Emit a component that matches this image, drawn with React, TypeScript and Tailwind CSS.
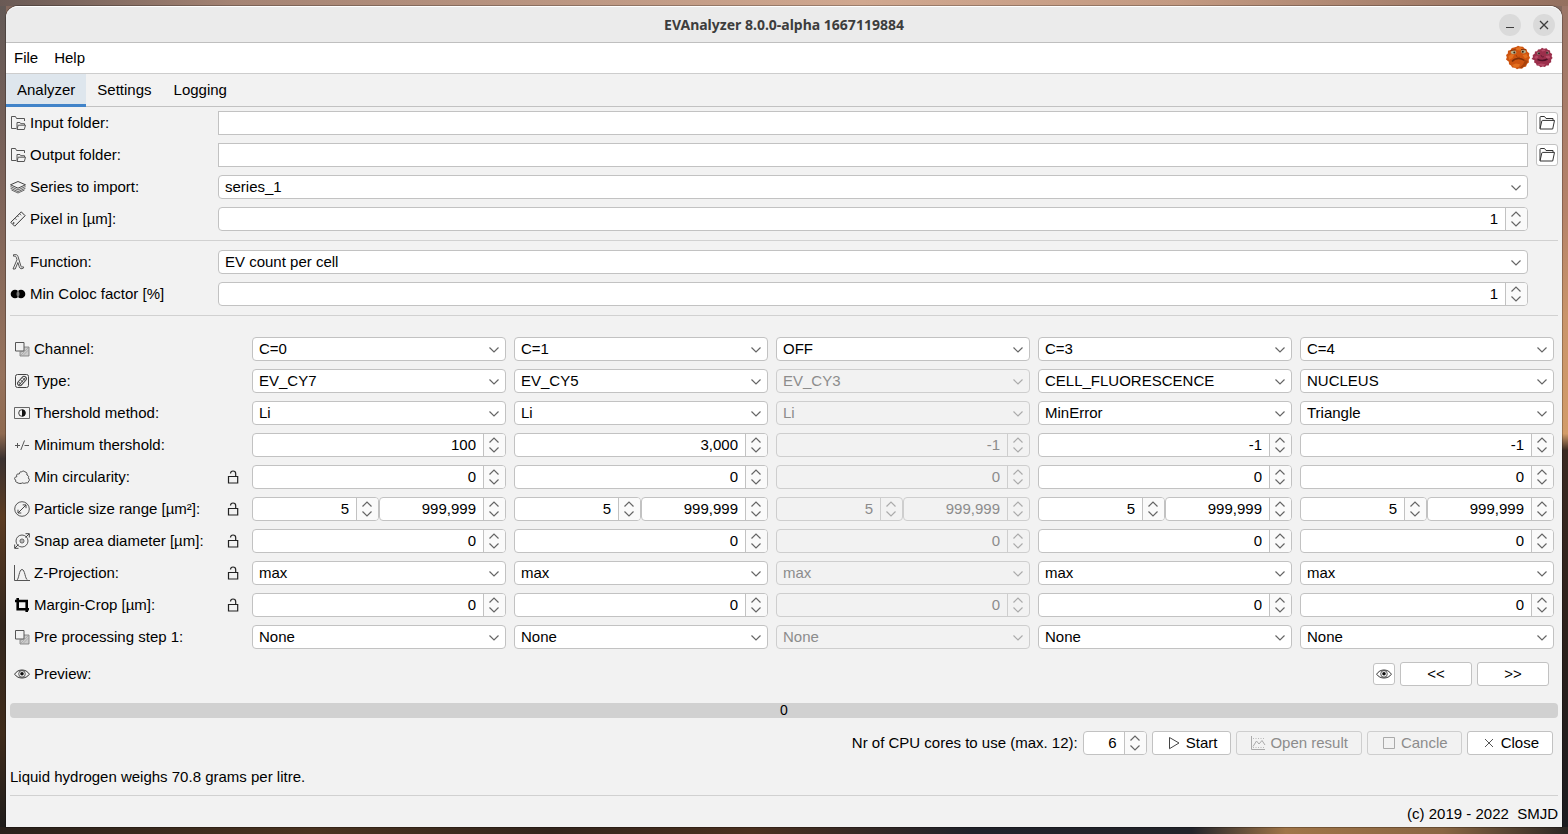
import { useState } from 'react';
import type { ReactNode } from 'react';
import clsx from 'clsx';

interface Channel {
  channel: string;
  type: string;
  method: string;
  threshold: string;
  disabled?: boolean;
}

interface ChannelRow {
  id: string;
  label: string;
  icon: ReactNode;
  lock?: boolean;
  cell: (channel: Channel, id: string) => ReactNode;
}

const channels: Channel[] = [
  { channel: 'C=0', type: 'EV_CY7', method: 'Li', threshold: '100' },
  { channel: 'C=1', type: 'EV_CY5', method: 'Li', threshold: '3,000' },
  { channel: 'OFF', type: 'EV_CY3', method: 'Li', threshold: '-1', disabled: true },
  { channel: 'C=3', type: 'CELL_FLUORESCENCE', method: 'MinError', threshold: '-1' },
  { channel: 'C=4', type: 'NUCLEUS', method: 'Triangle', threshold: '-1' },
];

const channelOptions = ['OFF', 'C=0', 'C=1', 'C=2', 'C=3', 'C=4'];
const typeOptions = ['EV_CY7', 'EV_CY5', 'EV_CY3', 'CELL_FLUORESCENCE', 'NUCLEUS'];
const methodOptions = ['Li', 'MinError', 'Triangle'];

/* ---------- icons ---------- */

function Svg({ children, className }: { children: ReactNode; className?: string }) {
  return (
    <svg
      viewBox="0 0 16 16"
      fill="none"
      stroke="currentColor"
      aria-hidden="true"
      className={clsx('h-4 w-4 shrink-0', className)}
    >
      {children}
    </svg>
  );
}

const FolderCopyIcon = () => (
  <Svg className="text-[#555555]">
    <path d="M6 13.5H1.5v-12h4l1 2h8V6" />
    <path d="M7 14V7.5h3l.8 1.2h3.7V10M7 14.500l1.2-4.300h7.300L14.300 14.500Z" />
  </Svg>
);

const LayersIcon = () => (
  <Svg className="text-[#444444]">
    <path d="M8 2.500l7.500 3.300L8 9.200.500 5.800Z" />
    <path d="M.5 7.500 8 10.900l7.500-3.400M.500 9.200 8 12.600l7.500-3.400M1.500 11 8 14l6.500-3" strokeWidth=".8" />
  </Svg>
);

const RulerIcon = () => (
  <Svg className="text-[#333333]">
    <path d="M.8 11.300 11.300 .9l3.800 3.800L4.700 15.200Z" />
    <path d="M5 7.300l1.500 1.500M7.500 4.900 8.600 6M9.600 2.800l1.500 1.500" strokeWidth=".8" />
    <circle cx="3.700" cy="12" r=".5" />
  </Svg>
);

const LambdaIcon = () => (
  <Svg className="text-[#444444]">
    <path
      d="M3.500.7h2.600c1 0 1.500.6 1.900 1.800l2.900 9.500c.4 1.200.9 1.500 2.300.6l.5 1.300c-2.500 1.600-3.700.9-4.400-1.100L7.900 8.500 5.200 15H3l4-9.300-.7-2.300C6 2.400 5.600 2.200 3.500 2.200Z"
      strokeWidth=".9"
    />
  </Svg>
);

const ColocIcon = () => (
  <Svg className="text-black">
    <circle cx="5" cy="8" r="4.300" fill="currentColor" stroke="none" />
    <circle cx="11" cy="8" r="4.300" fill="currentColor" stroke="none" />
    <path d="M8 5.300c1.300 1.500 1.300 3.900 0 5.400-1.300-1.500-1.300-3.900 0-5.400Z" stroke="#aaaaaa" strokeWidth=".8" fill="#555555" />
  </Svg>
);

const CopiesIcon = () => (
  <Svg className="text-[#555555]">
    <path d="M10 6h5v9H6v-4.500" fill="#cccccc" strokeWidth=".8" stroke="#777777" />
    <path d="M7 14l7-7M9 14.500l5.500-5.500M6.500 12l3-3" stroke="#999999" strokeWidth=".6" />
    <path d="M1.500 1.500h8.500v8.500H1.500Z" fill="#f2f2f2" />
  </Svg>
);

const TypeIcon = () => (
  <Svg className="text-[#444444]">
    <rect x="1.500" y="1.500" width="13" height="13" rx="2" />
    <rect x="5.700" y="2.600" width="4.600" height="10.800" rx="2.300" transform="rotate(42 8 8)" />
    <path d="M4.500 9l3 2.500M6.500 7l3 2.500M8.500 5l2.500 2.300" />
    <path d="M5 12l6.500-7.500" />
  </Svg>
);

const ContrastIcon = () => (
  <Svg className="text-[#666666]">
    <path d="M.5 2.500h15v11H.500Z" />
    <circle cx="8" cy="8" r="3.300" stroke="#111111" strokeWidth=".8" />
    <path d="M8 4.500a3.500 3.500 0 0 1 0 7Z" fill="#111111" stroke="none" />
  </Svg>
);

const PlusMinusIcon = () => (
  <Svg className="text-[#555555]">
    <path d="M1 8.500h5M3.500 6v5M10.500 3.500 6.800 13M10.500 8.500h4.500" />
  </Svg>
);

const CloudIcon = () => (
  <Svg className="text-[#444444]">
    <path d="M2.700 13.300c-.9-.2-1.300-.8-.9-1.500L.7 9.800c-.4-.8.100-1.500 1-1.700l1.100-.4-.2-1.400c0-.9.800-1.400 1.700-1.300l1-.1.400-1.200c.4-.9 1.200-1.200 2-.9l.8-.5c1-.5 2-.2 2.300.6l1.100.3c.9.300 1.200 1 .9 1.800l.2 1 1 .6c.8.600.800 1.500.3 2.200l.8 1.300c.5.900.3 1.800-.5 2.100l-.3 1c-.4.800-1.300.9-2.200.5-1 .7-2.300.8-3.500.2-1.600.8-3.800.900-5.900-.6Z" />
  </Svg>
);

const RangeIcon = () => (
  <Svg className="text-[#444444]">
    <circle cx="8" cy="8" r="7.300" strokeWidth=".9" />
    <path d="M4 12l8-8M8.700 3.900H12v3.300M4 8.700V12h3.300" />
  </Svg>
);

const SnapIcon = () => (
  <Svg className="text-[#444444]">
    <circle cx="8" cy="8" r="6" strokeWidth=".9" />
    <circle cx="8" cy="8" r="2" strokeWidth=".9" />
    <path d="M.8 15.200 4.500 11.500M11.500 4.500 15.200.800M11.500.700h3.800v3.800M.700 11.500v3.800h3.800" />
    <circle cx="8" cy="8" r=".7" fill="currentColor" stroke="none" />
  </Svg>
);

const CurveIcon = () => (
  <Svg className="text-[#555555]">
    <path d="M.5 0v15.500H16" />
    <path d="M3 15c2-1 2-10.500 5-10.500s3 9.500 5.500 10.500" />
  </Svg>
);

const CropIcon = () => (
  <Svg className="text-black">
    <path d="M1 4h11.700v11M3.700 1v11.300H15" strokeWidth="2.600" />
  </Svg>
);

const EyeIcon = () => (
  <Svg className="text-[#333333]">
    <path d="M.6 8.200C2.500 5.300 5 4 8 4s5.500 1.300 7.400 4.200C13.500 10.900 11 12 8 12S2.500 10.900.6 8.200Z" />
    <circle cx="8" cy="7.900" r="3.300" strokeWidth=".8" />
    <circle cx="8" cy="7.700" r="1.800" fill="#111111" stroke="none" />
  </Svg>
);

const LockIcon = () => (
  <svg viewBox="0 0 12 16" fill="none" stroke="#222222" className="h-4 w-3" aria-hidden="true">
    <path d="M3.500 4.500C3.600 2.900 4.500 2 6 2c1.700 0 2.700 1 2.700 2.700V8" strokeWidth="1.200" />
    <path d="M1.500 7.500h9.200v6.500H1.500Z" strokeWidth="1.200" />
  </svg>
);

const OpenFolderIcon = () => (
  <Svg className="text-[#333333]">
    <path d="M1 13.500V2.500C1 1.900 1.300 1.500 2 1.500h3.500l1.500 2h7v2" />
    <path d="M1 14 2.800 6c.1-.4.400-.6.800-.6h11.900L13.700 14Z" />
  </Svg>
);

const PlayIcon = () => (
  <Svg className="text-[#444444]">
    <path d="M3.500 2.500 13 8l-9.500 5.700Z" />
  </Svg>
);

const ChartIcon = () => (
  <Svg className="text-[#aaaaaa]">
    <path d="M1.500 1v13.500H15" />
    <path d="M3 11.500 6.500 6l2.500 3 3-3.500 3 4.500" />
    <path d="M3 3.500h11M3 12.500h11" strokeDasharray="1 1.500" strokeWidth=".8" />
  </Svg>
);

const StopIcon = () => (
  <Svg className="text-[#aaaaaa]">
    <path d="M2.500 2.500h11v11h-11Z" />
  </Svg>
);

const CrossIcon = () => (
  <Svg className="text-[#555555]">
    <path d="M4 4l8 8M12 4l-8 8" />
  </Svg>
);

const Mascots = () => (
  <svg viewBox="0 0 50 26" className="h-[26px] w-[50px]" aria-hidden="true">
    <path
      d="M9 2.500l2.500-.7 1.500-1 2 .8 3 .2 1.500 1.700 2 .7.8 2.500 2 1.500-.3 2.500 1 2-1.300 2 .2 2.800-2 1.500-.8 2.500-2.600.8-1.500 1.500-2.500-.5-2.500 1-2-1.500-2.800-.3-1.200-2-2-1.200-.2-2.500L1 14.500l.8-2.300L1 10l1.800-1.500.2-2.700 2.500-.8L6.800 3Z"
      fill="#cd5410"
    />
    <path d="M3.500 11l3-2 2.500 1-1.500 3-3.500 2ZM11 3l4-1 3 1.500-3 2-3.500-.5ZM17.500 10l4-1 1.500 3-3 1.500ZM7 20l4-1.500 4 .7-1 2.500-4 1.300Z" fill="#e3701f" />
    <path d="M20 15l3 1-2 4-4 3-3 .5 4-4Z" fill="#a9410a" />
    <path d="M7 16.500c2-2.500 4-3 6.500-3s4 .5 6 2" fill="none" stroke="#7f2f08" strokeWidth="1.500" />
    <path d="M11 10l1.500 2.500 2.500-.3" fill="none" stroke="#a03f0a" />
    <ellipse cx="8.500" cy="7.300" rx="2.600" ry="2" fill="#b7b08a" />
    <ellipse cx="18.500" cy="6.500" rx="2.400" ry="2" fill="#b7b08a" />
    <circle cx="9.300" cy="7.500" r="1" fill="#3b2110" />
    <circle cx="17.800" cy="6.700" r="1" fill="#3b2110" />
    <path d="M5.500 5.500l5-.7M16 4.500l5 .3" fill="none" stroke="#7f2f08" />
    <path
      d="M33 4.500l2.500-.3 1.500-1.400 2 .9 2.500-.5 1.200 1.600 2.300.7.3 2.300 1.900 1.200-.6 2.300 1 1.700-1.500 1.700.1 2.500-1.900 1-.6 2.200-2.400.2-1.300 1.500-2.200-.7-2.300.9-1.500-1.500-2.300-.2-.7-2-1.900-1.100.3-2.300L26.500 14l1.400-1.800-.2-2.300 1.900-1.100.4-2.300 2.200-.3Z"
      fill="#9a2f4b"
    />
    <path d="M29 12l3-1.500 1.500 1.500-2.500 2ZM40.500 11l4-.5.5 2.500-3 .7ZM32 19.500l4-1 4.500.7-2.500 2ZM36 5l3-.7 1.500 1.500-3 .7Z" fill="#b84a67" />
    <path d="M32.500 14.500c3 1.300 7 1.300 10-.5" fill="none" stroke="#4f1026" strokeWidth="1.500" />
    <path d="M36 10l1 2 2-.3" fill="none" stroke="#6d1c34" />
    <circle cx="33.500" cy="8.300" r="1.500" fill="#8d7f74" />
    <circle cx="42.500" cy="7.800" r="1.500" fill="#8d7f74" />
    <circle cx="34" cy="8.300" r=".9" fill="#2a1018" />
    <circle cx="42" cy="7.800" r=".9" fill="#2a1018" />
  </svg>
);

/* ---------- controls ---------- */

interface FieldProps {
  id: string;
  value: string;
  label?: string;
  disabled?: boolean;
  className?: string;
}

function Select({ id, value, label, disabled, options = [value] }: FieldProps & { options?: string[] }) {
  return (
    <div className="relative min-w-0">
      <select
        id={id}
        aria-label={label}
        defaultValue={value}
        disabled={disabled}
        className="block h-6 w-full appearance-none rounded-sm border border-[#c2c2c2] bg-white px-1.5 text-black opacity-100 outline-none disabled:border-[#cecece] disabled:bg-[#f2f2f2] disabled:text-[#8c8c8c]"
      >
        {options.map((option) => (
          <option key={option}>{option}</option>
        ))}
      </select>
      <svg
        viewBox="0 0 10 6"
        fill="none"
        stroke={disabled ? '#ababab' : '#666666'}
        strokeWidth="1.200"
        className="pointer-events-none absolute top-[10px] right-[7px] h-[6px] w-[10px]"
        aria-hidden="true"
      >
        <path d="M.5.5 5 5 9.500.5" />
      </svg>
    </div>
  );
}

function Spinner({ id, value, label, disabled, className }: FieldProps) {
  const stroke = disabled ? '#ababab' : '#666666';

  return (
    <div
      className={clsx(
        'flex h-6 min-w-0 overflow-hidden rounded-sm border',
        disabled ? 'border-[#cecece] bg-[#f2f2f2]' : 'border-[#c2c2c2] bg-white',
        className
      )}
    >
      <input
        id={id}
        type="text"
        inputMode="numeric"
        aria-label={label}
        defaultValue={value}
        disabled={disabled}
        className="w-0 min-w-0 flex-1 bg-transparent pr-[7px] text-right text-black outline-none disabled:text-[#8c8c8c]"
      />
      <div
        className={clsx(
          'flex w-[22px] shrink-0 flex-col items-center border-l pr-px',
          disabled ? 'border-[#cecece]' : 'border-[#c2c2c2] bg-[#fafafa]'
        )}
      >
        <button type="button" aria-label="Increase" disabled={disabled} className="flex flex-1 items-end pb-[2px]">
          <svg viewBox="0 0 10 6" fill="none" stroke={stroke} strokeWidth="1.200" className="h-[6px] w-[10px]">
            <path d="M.5 5.500 5 1l4.500 4.500" />
          </svg>
        </button>
        <button type="button" aria-label="Decrease" disabled={disabled} className="flex flex-1 items-start pt-[2px]">
          <svg viewBox="0 0 10 6" fill="none" stroke={stroke} strokeWidth="1.200" className="h-[6px] w-[10px]">
            <path d="M.5.5 5 5 9.500.5" />
          </svg>
        </button>
      </div>
    </div>
  );
}

function FieldLabel({ htmlFor, icon, children }: { htmlFor: string; icon: ReactNode; children: ReactNode }) {
  return (
    <label htmlFor={htmlFor} className="flex h-6 items-center gap-1 whitespace-nowrap">
      {icon}
      {children}
    </label>
  );
}

function Button({ icon, disabled, children }: { icon?: ReactNode; disabled?: boolean; children: ReactNode }) {
  return (
    <button
      type="button"
      disabled={disabled}
      className="flex h-6 min-w-[72px] items-center justify-center gap-1 rounded-[3px] border border-[#c2c2c2] bg-white px-[13px] disabled:border-[#cecece] disabled:bg-[#f2f2f2] disabled:text-[#8c8c8c]"
    >
      {icon}
      {children}
    </button>
  );
}

function IconButton({ label, children }: { label: string; children: ReactNode }) {
  return (
    <button
      type="button"
      aria-label={label}
      className="flex h-[22px] w-[22px] items-center justify-center rounded-[3px] border border-[#c2c2c2] bg-white"
    >
      {children}
    </button>
  );
}

const Divider = () => <hr className="my-[9px] border-t border-[#d1d1d1]" />;

/* ---------- channel table ---------- */

const zeroCell = (label: string) => (c: Channel, id: string) => (
  <Spinner id={id} value="0" label={label} disabled={c.disabled} />
);

const channelRows: ChannelRow[] = [
  {
    id: 'channel',
    label: 'Channel:',
    icon: <CopiesIcon />,
    cell: (c, id) => <Select id={id} value={c.channel} options={channelOptions} label="Channel" />,
  },
  {
    id: 'type',
    label: 'Type:',
    icon: <TypeIcon />,
    cell: (c, id) => <Select id={id} value={c.type} options={typeOptions} label="Type" disabled={c.disabled} />,
  },
  {
    id: 'method',
    label: 'Thershold method:',
    icon: <ContrastIcon />,
    cell: (c, id) => (
      <Select id={id} value={c.method} options={methodOptions} label="Thershold method" disabled={c.disabled} />
    ),
  },
  {
    id: 'threshold',
    label: 'Minimum thershold:',
    icon: <PlusMinusIcon />,
    cell: (c, id) => <Spinner id={id} value={c.threshold} label="Minimum thershold" disabled={c.disabled} />,
  },
  {
    id: 'circularity',
    label: 'Min circularity:',
    icon: <CloudIcon />,
    lock: true,
    cell: zeroCell('Min circularity'),
  },
  {
    id: 'size',
    label: 'Particle size range [µm²]:',
    icon: <RangeIcon />,
    lock: true,
    cell: (c, id) => (
      <div className="grid min-w-0 grid-cols-2">
        <Spinner id={id} value="5" label="Min particle size" disabled={c.disabled} />
        <Spinner id={`${id}-max`} value="999,999" label="Max particle size" disabled={c.disabled} />
      </div>
    ),
  },
  {
    id: 'snap',
    label: 'Snap area diameter [µm]:',
    icon: <SnapIcon />,
    lock: true,
    cell: zeroCell('Snap area diameter'),
  },
  {
    id: 'projection',
    label: 'Z-Projection:',
    icon: <CurveIcon />,
    lock: true,
    cell: (c, id) => <Select id={id} value="max" label="Z-Projection" disabled={c.disabled} />,
  },
  {
    id: 'margin',
    label: 'Margin-Crop [µm]:',
    icon: <CropIcon />,
    lock: true,
    cell: zeroCell('Margin-Crop'),
  },
  {
    id: 'pre',
    label: 'Pre processing step 1:',
    icon: <CopiesIcon />,
    cell: (c, id) => <Select id={id} value="None" label="Pre processing step 1" disabled={c.disabled} />,
  },
];

function ChannelTable() {
  return (
    <div className="mt-[21px] grid gap-y-2 px-1">
      {channelRows.map((row) => (
        <div key={row.id} className="grid grid-cols-[230px_repeat(5,minmax(0,1fr))] gap-x-2">
          <div className="flex items-center justify-between pr-[5px]">
            <FieldLabel htmlFor={`${row.id}-0`} icon={row.icon}>
              {row.label}
            </FieldLabel>
            {row.lock && (
              <button type="button" aria-label="Lock">
                <LockIcon />
              </button>
            )}
          </div>
          {channels.map((channel, i) => (
            <div key={i} className="min-w-0">
              {row.cell(channel, `${row.id}-${i}`)}
            </div>
          ))}
        </div>
      ))}
    </div>
  );
}

/* ---------- window ---------- */

function TitleBar() {
  return (
    <header className="relative flex h-[37px] items-center justify-end gap-[12px] rounded-t-xl border-t border-b border-t-white border-b-[#bfbfbf] bg-[#ebebeb] pr-[7px]">
      <h1 className="pointer-events-none absolute inset-x-0 text-center font-['Noto_Sans',sans-serif] text-[14px] font-bold text-[#3d3d3d]">
        EVAnalyzer 8.0.0-alpha 1667119884
      </h1>
      <button
        type="button"
        aria-label="Minimize"
        className="flex h-[22px] w-[22px] items-center justify-center rounded-full bg-[#dadada]"
      >
        <svg viewBox="0 0 10 10" stroke="#3d3d3d" className="h-[10px] w-[10px]">
          <path d="M1 7.500h8" />
        </svg>
      </button>
      <button
        type="button"
        aria-label="Close window"
        className="flex h-[22px] w-[22px] items-center justify-center rounded-full bg-[#dadada]"
      >
        <svg viewBox="0 0 10 10" stroke="#3d3d3d" strokeWidth="1.300" className="h-[10px] w-[10px]">
          <path d="M1 1l8 8M9 1 1 9" />
        </svg>
      </button>
    </header>
  );
}

function MenuBar() {
  return (
    <nav className="flex h-[31px] items-center border-b border-[#cdcdcd] bg-white">
      <button type="button" className="px-2">
        File
      </button>
      <button type="button" className="px-2">
        Help
      </button>
      <div className="ml-auto pr-[7px]">
        <Mascots />
      </div>
    </nav>
  );
}

function Tabs() {
  const [active, setActive] = useState('Analyzer');

  return (
    <div role="tablist" className="flex h-[33px] border-b border-[#c2c2c2]">
      {['Analyzer', 'Settings', 'Logging'].map((tab) => (
        <button
          key={tab}
          type="button"
          role="tab"
          aria-selected={active === tab}
          onClick={() => setActive(tab)}
          className={clsx(
            '-mb-px border-b-[3px] px-[11px] pt-[2px]',
            active === tab ? 'border-[#4083c9] bg-[#dee6ed]' : 'border-transparent'
          )}
        >
          {tab}
        </button>
      ))}
    </div>
  );
}

export default function App() {
  return (
    <div className="flex min-h-screen flex-col bg-[#84695e] bg-[linear-gradient(#9b7668,#b5836a_25%,#c9956b_38%,#d29c69_52%,#3a2a22_54%,#2e221c_75%,#1b1c20)] bg-[length:6px_100%] bg-right bg-no-repeat">
      <div className="flex flex-1 flex-col bg-[linear-gradient(90deg,#6a5a55,#a58474_15%,#d0a890_55%,#c39a82_75%,#94705f),linear-gradient(90deg,#2a211b,#4a3320_20%,#33251c_35%,#4b301f_48%,#20222a_62%,#23242b_76%,#a07548_82%,#8a6643_92%,#2c2724),linear-gradient(#625956,#7b6259_20%,#96725c_45%,#8f6a50_52%,#3b3230_55%,#5c3c22_62%,#33271e_75%,#3f2b1a_88%,#1d1b1a)] bg-[length:100%_6px,100%_7px,6px_100%] bg-[position:top,bottom,left] bg-no-repeat p-[6px] pb-[7px] font-['Liberation_Sans',Arial,sans-serif] text-[15px] leading-5 text-black">
        <div className="flex flex-1 flex-col rounded-t-xl bg-[#f2f2f2] shadow-[0_0_0_1px_rgba(0,0,0,0.25)]">
          <TitleBar />
          <MenuBar />
          <Tabs />

          <main className="px-1 pt-1">
            <div className="grid grid-cols-[200px_minmax(0,1fr)_22px] items-center gap-x-2 gap-y-2">
              <FieldLabel htmlFor="input-folder" icon={<FolderCopyIcon />}>
                Input folder:
              </FieldLabel>
              <input id="input-folder" type="text" className="h-6 border border-[#c2c2c2] bg-white px-1.5" />
              <IconButton label="Choose input folder">
                <OpenFolderIcon />
              </IconButton>

              <FieldLabel htmlFor="output-folder" icon={<FolderCopyIcon />}>
                Output folder:
              </FieldLabel>
              <input id="output-folder" type="text" className="h-6 border border-[#c2c2c2] bg-white px-1.5" />
              <IconButton label="Choose output folder">
                <OpenFolderIcon />
              </IconButton>

              <FieldLabel htmlFor="series" icon={<LayersIcon />}>
                Series to import:
              </FieldLabel>
              <Select id="series" value="series_1" />
              <span />

              <FieldLabel htmlFor="pixel" icon={<RulerIcon />}>
                Pixel in [µm]:
              </FieldLabel>
              <Spinner id="pixel" value="1" />
            </div>

            <Divider />

            <div className="grid grid-cols-[200px_minmax(0,1fr)_22px] items-center gap-x-2 gap-y-2">
              <FieldLabel htmlFor="function" icon={<LambdaIcon />}>
                Function:
              </FieldLabel>
              <Select id="function" value="EV count per cell" />
              <span />

              <FieldLabel htmlFor="coloc" icon={<ColocIcon />}>
                Min Coloc factor [%]
              </FieldLabel>
              <Spinner id="coloc" value="1" />
            </div>

            <Divider />

            <ChannelTable />

            <div className="mt-[13px] flex items-center gap-[5px] pr-[9px] pl-1">
              <div className="mr-auto flex items-center gap-1">
                <EyeIcon />
                Preview:
              </div>
              <IconButton label="Show preview">
                <EyeIcon />
              </IconButton>
              <Button>&lt;&lt;</Button>
              <Button>&gt;&gt;</Button>
            </div>

            <div
              role="progressbar"
              aria-valuenow={0}
              aria-valuemin={0}
              aria-valuemax={100}
              className="mt-[17px] flex h-[15px] items-center justify-center rounded-sm bg-[#d1d1d1] pb-px text-[14px]"
            >
              0
            </div>

            <div className="mt-[13px] flex items-center justify-end gap-[5px] pr-[5px]">
              <label htmlFor="cores">Nr of CPU cores to use (max. 12):</label>
              <Spinner id="cores" value="6" className="w-16" />
              <Button icon={<PlayIcon />}>Start</Button>
              <Button icon={<ChartIcon />} disabled>
                Open result
              </Button>
              <Button icon={<StopIcon />} disabled>
                Cancle
              </Button>
              <Button icon={<CrossIcon />}>Close</Button>
            </div>

            <p className="mt-3">Liquid hydrogen weighs 70.8 grams per litre.</p>
          </main>

          <footer className="mx-1 mt-2 border-t border-[#d1d1d1] pt-2 text-right whitespace-pre">
            (c) 2019 - 2022  SMJD
          </footer>
        </div>
      </div>
    </div>
  );
}
